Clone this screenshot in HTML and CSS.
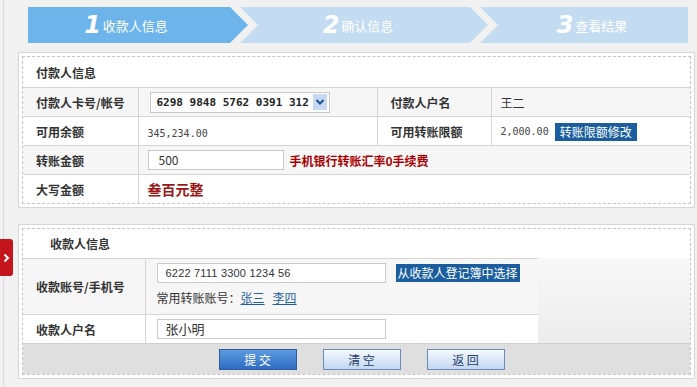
FILE: index.html
```html
<!DOCTYPE html>
<html lang="zh-CN">
<head>
    <meta charset="UTF-8">
    <title>手机银行转账</title>
    <link rel="stylesheet" href="styles.css">
</head>
<body>
<div class="page">

    <!-- steps -->
    <div class="steps">
        <div class="step step-first step-on"><span class="num">1</span>收款人信息</div>
        <div class="step step-mid"><span class="num">2</span>确认信息</div>
        <div class="step step-last"><span class="num">3</span>查看结果</div>
    </div>

    <!-- payer -->
    <div class="panel">
        <div class="panel-in">
            <table class="info">
                <colgroup><col class="c1"><col class="c2"><col class="c3"><col></colgroup>
                <tr class="title-row"><td colspan="4">付款人信息</td></tr>
                <tr class="odd">
                    <th>付款人卡号/帐号</th>
                    <td>
                        <div class="select">
                            <span class="select-text">6298 9848 5762 0391 312</span>
                            <span class="select-arrow">
                                <svg width="10" height="8" viewBox="0 0 10 8"><path d="M1.5 2 L5 5.5 L8.5 2" fill="none" stroke="#1f4f96" stroke-width="2"/></svg>
                            </span>
                        </div>
                    </td>
                    <th>付款人户名</th>
                    <td>王二</td>
                </tr>
                <tr>
                    <th>可用余额</th>
                    <td><span class="money">345,234.00</span></td>
                    <th>可用转账限额</th>
                    <td><span class="money">2,000.00</span><a class="btn-dark">转账限额修改</a></td>
                </tr>
                <tr class="odd">
                    <th>转账金额</th>
                    <td colspan="3"><span class="input input-short">500</span><span class="note">手机银行转账汇率0手续费</span></td>
                </tr>
                <tr>
                    <th>大写金额</th>
                    <td colspan="3"><span class="upper">叁百元整</span></td>
                </tr>
            </table>
        </div>
    </div>

    <!-- payee -->
    <div class="panel panel-2">
        <div class="panel-in">
            <div class="p2-title"><span class="p2-title-text">收款人信息</span></div>
            <div class="p2-body">
                <table class="info info-2">
                    <colgroup><col class="c1b"><col></colgroup>
                    <tr class="odd tall">
                        <th>收款账号/手机号</th>
                        <td>
                            <div class="line">
                                <span class="input input-long acct">6222 7111 3300 1234 56</span>
                                <a class="btn-dark">从收款人登记簿中选择</a>
                            </div>
                            <div class="common">常用转账账号：<a href="#">张三</a><a href="#">李四</a></div>
                        </td>
                    </tr>
                    <tr>
                        <th>收款人户名</th>
                        <td><span class="input input-long">张小明</span></td>
                    </tr>
                </table>
                <div class="p2-side"></div>
            </div>
            <div class="actions">
                <button class="btn-main">提 交</button>
                <button class="btn-light">清 空</button>
                <button class="btn-light">返 回</button>
            </div>
        </div>
    </div>

</div>

<!-- side tab -->
<div class="side-tab">
    <svg width="7" height="10" viewBox="0 0 7 10"><path d="M1.5 1.5 L5 5 L1.5 8.5" fill="none" stroke="#fff" stroke-width="2"/></svg>
</div>
</body>
</html>
```

FILE: styles.css
```css
body {
    margin: 0;
    background-color: #f1f1f1;
    font-family: "Noto Sans CJK SC", "Liberation Sans", sans-serif;
    font-size: 12px;
    color: #333;
    height: 387px;
    overflow: hidden;
}
.page {
    margin-left: 3px;
    border-left: 1px solid #dadada;
    min-height: 387px;
    padding-top: 7px;
    box-sizing: border-box;
}

/* steps */
.steps {
    display: flex;
    height: 36px;
    margin-left: 24px;
}
.step {
    display: flex;
    align-items: center;
    justify-content: center;
    box-sizing: border-box;
    height: 36px;
    background-color: #c4dcf1;
    color: #fff;
    font-size: 13px;
}
.step-on {
    background-color: #6db4ea;
}
.step .num {
    font-family: "DejaVu Sans", sans-serif;
    font-style: italic;
    font-weight: bold;
    font-size: 24px;
    margin-right: 2px;
    line-height: 1;
}
.step-first {
    width: 220px;
    padding-right: 24px;
    clip-path: polygon(0 0, calc(100% - 18px) 0, 100% 50%, calc(100% - 18px) 100%, 0 100%);
}
.step-mid {
    width: 248px;
    margin-left: -8px;
    padding: 0 26px 0 14px;
    clip-path: polygon(0 0, calc(100% - 18px) 0, 100% 50%, calc(100% - 18px) 100%, 0 100%, 18px 50%);
}
.step-last {
    width: 208px;
    margin-left: -8px;
    padding-left: 16px;
    clip-path: polygon(0 0, 100% 0, 100% 100%, 0 100%, 18px 50%);
}

/* panels */
.panel {
    margin: 9px 2px 0 14px;
    border: 1px solid #d6d6d6;
    background-color: #fff;
    padding: 3px;
}
.panel-2 {
    margin-top: 16px;
}
.panel-in {
    border: 1px dashed #c6c6c6;
}

.info {
    width: 100%;
    border-collapse: collapse;
}
.info .c1 { width: 115px; }
.info .c2 { width: 239px; }
.info .c3 { width: 114px; }
.info th,
.info td {
    border-top: 1px solid #d5d5d5;
    padding: 0;
    height: 28px;
    text-align: left;
    vertical-align: middle;
    white-space: nowrap;
}
.info th {
    font-weight: bold;
    padding-left: 13px;
}
.info td {
    padding-left: 9px;
}
.info th + td,
.info td + th {
    border-left: 1px solid #d5d5d5;
}
.info .odd th,
.info .odd td {
    background-color: #f6f6f6;
}
.info .title-row td {
    border-top: none;
    height: 30px;
    font-weight: bold;
    padding-left: 13px;
}

.select {
    display: inline-flex;
    align-items: center;
    justify-content: space-between;
    width: 180px;
    height: 21px;
    box-sizing: border-box;
    border: 1px solid #c9c9c9;
    background-color: #fff;
    padding: 0 2px 0 6px;
    margin-left: 2px;
    vertical-align: middle;
}
.select-text {
    font-family: "DejaVu Sans Mono", monospace;
    font-weight: bold;
    font-size: 11px;
    color: #222;
}
.select-arrow {
    display: flex;
    align-items: center;
    justify-content: center;
    width: 14px;
    height: 16px;
    background-color: #c7daf2;
}

.money {
    font-family: "DejaVu Sans Mono", monospace;
    font-size: 10px;
    color: #444;
}
.btn-dark {
    display: inline-block;
    background-color: #1b5e9d;
    color: #fff;
    padding: 0 5px;
    height: 18px;
    line-height: 18px;
    margin-left: 6px;
    vertical-align: middle;
}

.input {
    display: inline-block;
    box-sizing: border-box;
    height: 20px;
    line-height: 18px;
    border: 1px solid #cbcbcb;
    background-color: #fff;
    vertical-align: middle;
    padding-left: 10px;
    color: #333;
}
.input-short {
    width: 136px;
}
.input-long {
    width: 229px;
    padding-left: 8px;
    font-size: 13px;
}
.acct {
    font-family: "Liberation Sans", sans-serif;
    font-size: 11px;
    letter-spacing: 0.2px;
}
.note {
    color: #a80000;
    font-weight: bold;
    margin-left: 6px;
    vertical-align: middle;
}
.upper {
    color: #9a1717;
    font-weight: bold;
    font-size: 14px;
}

/* payee */
.p2-title {
    height: 29px;
    line-height: 29px;
    font-weight: bold;
}
.p2-title-text {
    display: inline-block;
    margin-left: 27px;
}
.p2-body {
    display: flex;
}
.info-2 {
    width: 515px;
}
.info-2 .c1b { width: 122px; }
.info-2 td {
    padding-left: 11px;
}
.info-2 .tall th {
    height: 55px;
}
.info-2 .tall td {
    height: 51px;
    vertical-align: top;
    padding-top: 4px;
}
.line {
    display: flex;
    align-items: center;
}
.line .btn-dark {
    margin-left: 10px;
    padding: 0 2px;
}
.common {
    margin-top: 6px;
    line-height: 18px;
}
.common a {
    color: #1e5f9e;
    margin-right: 8px;
}
.p2-side {
    flex: 1;
    background: linear-gradient(#f8f8f8, #ececec);
}

.actions {
    display: flex;
    justify-content: center;
    gap: 26px;
    height: 30px;
    align-items: center;
    background-color: #dfdfdf;
    border-top: 1px solid #d0d0d0;
    padding-left: 10px;
}
.actions button {
    width: 78px;
    height: 21px;
    font-family: "Noto Sans CJK SC", sans-serif;
    font-size: 12px;
    padding: 0;
    cursor: pointer;
}
.btn-main {
    background: linear-gradient(#5d9be0, #2d6cc2);
    border: 1px solid #2c5d9e;
    color: #fff;
}
.btn-light {
    background: linear-gradient(#f5f9fe, #c3d7f1);
    border: 1px solid #6a8cbb;
    color: #1f3d6b;
}

.side-tab {
    position: absolute;
    left: 0;
    top: 239px;
    width: 13px;
    height: 37px;
    background-color: #c4151c;
    border-radius: 0 3px 3px 0;
    display: flex;
    align-items: center;
    justify-content: center;
}
```
